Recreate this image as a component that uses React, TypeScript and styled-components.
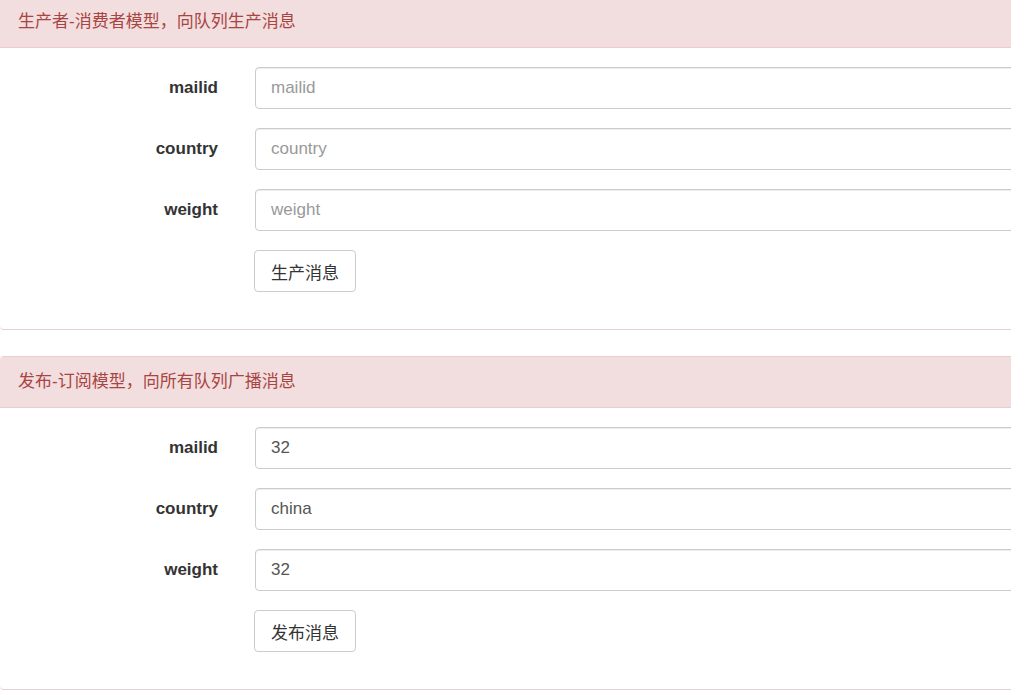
import React from "react";
import styled, { createGlobalStyle } from "styled-components";

const GlobalStyle = createGlobalStyle`
  html, body {
    margin: 0;
    padding: 0;
    overflow: hidden;
    background: #fff;
  }
  body {
    font-family: "Liberation Sans", Arial, "Noto Sans CJK SC", sans-serif;
    color: #333;
  }
  * { box-sizing: border-box; }
`;

const Page = styled.div`
  width: 1050px;
  margin-top: -4px;
  display: flex;
  flex-direction: column;
  gap: 26px;
`;

const Panel = styled.section`
  border: 1px solid #ebccd1;
  border-left-width: 0;
  border-radius: 4px;
  background: #fff;
  overflow: hidden;
`;

const PanelHeading = styled.div`
  background: #f2dede;
  color: #a94442;
  border-bottom: 1px solid #ebccd1;
  padding: 15px 18px;
  font-size: 17px;
  line-height: 20px;
  font-family: "Liberation Sans", Arial, "Noto Sans CJK SC", sans-serif;
`;

const PanelBody = styled.div`
  padding: 19px 0 37px;
  display: flex;
  flex-direction: column;
  gap: 19px;
`;

const FormRow = styled.div`
  display: grid;
  grid-template-columns: 218px 1fr;
  column-gap: 37px;
  align-items: center;
`;

const Label = styled.label`
  text-align: right;
  font-weight: bold;
  font-size: 17px;
  color: #333;
`;

const Input = styled.input`
  height: 42px;
  width: 100%;
  padding: 0 15px;
  font-size: 17px;
  font-family: "Liberation Sans", Arial, "Noto Sans CJK SC", sans-serif;
  color: #555;
  background: #fff;
  border: 1px solid #ccc;
  border-radius: 4px;
  box-shadow: inset 0 1px 1px rgba(0, 0, 0, 0.075);
  outline: none;
  &::placeholder {
    color: #999;
  }
`;

const Button = styled.button`
  justify-self: start;
  height: 42px;
  padding: 0 16px;
  font-size: 17px;
  font-family: "Liberation Sans", Arial, "Noto Sans CJK SC", sans-serif;
  color: #333;
  background: #fff;
  border: 1px solid #ccc;
  border-radius: 4px;
  cursor: pointer;
  margin-left: -1px;
`;

type Field = { name: string; value?: string };

const FormPanel: React.FC<{ title: string; fields: Field[]; action: string }> = ({
  title,
  fields,
  action,
}) => (
  <Panel>
    <PanelHeading>{title}</PanelHeading>
    <PanelBody>
      {fields.map((f) => (
        <FormRow key={f.name}>
          <Label>{f.name}</Label>
          <Input placeholder={f.name} value={f.value ?? ""} readOnly />
        </FormRow>
      ))}
      <FormRow>
        <span />
        <Button>{action}</Button>
      </FormRow>
    </PanelBody>
  </Panel>
);

export default function App() {
  return (
    <>
      <GlobalStyle />
      <Page>
        <FormPanel
          title="生产者-消费者模型，向队列生产消息"
          fields={[{ name: "mailid" }, { name: "country" }, { name: "weight" }]}
          action="生产消息"
        />
        <FormPanel
          title="发布-订阅模型，向所有队列广播消息"
          fields={[
            { name: "mailid", value: "32" },
            { name: "country", value: "china" },
            { name: "weight", value: "32" },
          ]}
          action="发布消息"
        />
      </Page>
    </>
  );
}
